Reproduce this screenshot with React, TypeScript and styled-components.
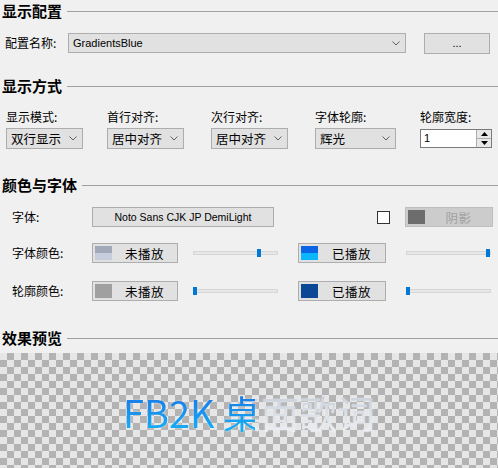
import React from 'react';
import styled, { createGlobalStyle } from 'styled-components';

const Global = createGlobalStyle`
  html, body { margin: 0; padding: 0; background: #f0f0f0; }
  body {
    font-family: "Liberation Sans", "Noto Sans CJK SC", sans-serif;
    font-size: 12px;
    color: #000;
  }
  #root { width: 498px; height: 468px; overflow: hidden; }
`;

const Page = styled.div`
  display: flex;
  flex-direction: column;
  width: 498px;
  height: 468px;
`;

const SectionHead = styled.div<{ $mt?: number }>`
  display: flex;
  align-items: center;
  gap: 5px;
  height: 22px;
  margin-top: ${p => p.$mt ?? 0}px;
  padding-left: 2px;
`;

const SectionTitle = styled.span`
  font-family: "Noto Sans CJK SC", sans-serif;
  font-weight: 700;
  font-size: 15px;
  line-height: 22px;
  white-space: nowrap;
`;

const SectionRule = styled.div`
  flex: 1;
  height: 1px;
  background: #a0a0a0;
`;

const ConfigRow = styled.div`
  display: flex;
  align-items: center;
  height: 22px;
  margin-top: 10px;
  padding-left: 5px;
`;

const Label = styled.span<{ $w?: number }>`
  width: ${p => (p.$w ? `${p.$w}px` : 'auto')};
  flex: none;
  font-family: "Noto Sans CJK SC", sans-serif;
  font-size: 12px;
  line-height: 14px;
  white-space: nowrap;
`;

const Combo = styled.div<{ $w: number; $h?: number }>`
  box-sizing: border-box;
  width: ${p => p.$w}px;
  height: ${p => p.$h ?? 21}px;
  display: flex;
  align-items: center;
  justify-content: space-between;
  padding: 0 5px 0 4px;
  background: #e1e1e1;
  border: 1px solid #adadad;
  font-family: "Noto Sans CJK SC", sans-serif;
  font-size: 12.5px;
`;

const ComboText = styled.span<{ $latin?: boolean }>`
  font-family: ${p => (p.$latin ? '"Liberation Sans", sans-serif' : '"Noto Sans CJK SC", sans-serif')};
  font-size: ${p => (p.$latin ? '11px' : '12.5px')};
  white-space: nowrap;
`;

const Chevron = () => (
  <svg width="8" height="5" viewBox="0 0 8 5" style={{ flex: 'none' }}>
    <polyline points="0.5,0.5 4,4 7.5,0.5" fill="none" stroke="#606060" strokeWidth="1" />
  </svg>
);

const PlainButton = styled.div<{ $w: number; $ml?: number }>`
  box-sizing: border-box;
  width: ${p => p.$w}px;
  height: 21px;
  margin-left: ${p => p.$ml ?? 0}px;
  display: flex;
  align-items: center;
  justify-content: center;
  background: #e1e1e1;
  border: 1px solid #adadad;
  font-family: "Liberation Sans", sans-serif;
  font-size: 11px;
`;

const ModeGrid = styled.div`
  display: grid;
  grid-template-columns: 101px 104px 104px 105px 72px;
  margin-top: 13px;
  padding-left: 6px;
`;

const Field = styled.div`
  display: flex;
  flex-direction: column;
  gap: 4px;
`;

const Spin = styled.div`
  box-sizing: border-box;
  width: 72px;
  height: 19px;
  margin-top: 1px;
  display: flex;
  align-items: stretch;
  background: #fff;
  border: 1px solid #7a7a7a;
`;

const SpinValue = styled.span`
  flex: 1;
  padding-left: 3px;
  font-family: "Liberation Sans", sans-serif;
  font-size: 11px;
  line-height: 17px;
`;

const SpinButtons = styled.div`
  width: 14px;
  display: flex;
  flex-direction: column;
  border-left: 1px solid #adadad;
`;

const SpinHalf = styled.div<{ $top?: boolean }>`
  flex: 1;
  display: flex;
  align-items: center;
  justify-content: center;
  background: #e8e8e8;
  border-bottom: ${p => (p.$top ? '1px solid #adadad' : 'none')};
`;

const Tri = ({ up }: { up?: boolean }) => (
  <svg width="7" height="4" viewBox="0 0 7 4">
    <polygon points={up ? '0,4 3.5,0 7,4' : '0,0 3.5,4 7,0'} fill="#000" />
  </svg>
);

const ItemRow = styled.div<{ $mt: number }>`
  display: flex;
  align-items: center;
  height: 20px;
  margin-top: ${p => p.$mt}px;
  padding-left: 12px;
`;

const FontButton = styled.div`
  box-sizing: border-box;
  width: 182px;
  height: 20px;
  display: flex;
  align-items: center;
  justify-content: center;
  background: #e1e1e1;
  border: 1px solid #adadad;
  font-family: "Liberation Sans", sans-serif;
  font-size: 10.5px;
  white-space: nowrap;
`;

const CheckBox = styled.div`
  box-sizing: border-box;
  width: 13px;
  height: 13px;
  margin-left: 103px;
  background: #fff;
  border: 1px solid #333;
`;

const ColorButton = styled.div<{ $w: number; $ml?: number; $disabled?: boolean }>`
  box-sizing: border-box;
  width: ${p => p.$w}px;
  height: 20px;
  margin-left: ${p => p.$ml ?? 0}px;
  display: flex;
  align-items: center;
  padding-left: 2px;
  background: ${p => (p.$disabled ? '#cccccc' : '#e1e1e1')};
  border: 1px solid ${p => (p.$disabled ? '#bfbfbf' : '#adadad')};
  color: ${p => (p.$disabled ? '#a0a0a0' : '#000')};
`;

const Swatch = styled.div<{ $bg: string }>`
  flex: none;
  width: 17px;
  height: 14px;
  background: ${p => p.$bg};
`;

const ColorText = styled.span`
  flex: 1;
  text-align: center;
  font-family: "Noto Sans CJK SC", sans-serif;
  font-size: 12.5px;
  letter-spacing: 0.5px;
`;

const SliderTrack = styled.div<{ $ml: number }>`
  position: relative;
  box-sizing: border-box;
  width: 85px;
  height: 4px;
  margin-left: ${p => p.$ml}px;
  background: #e7e7e7;
  border: 1px solid #d6d6d6;
`;

const SliderThumb = styled.div`
  position: absolute;
  top: -3px;
  width: 4px;
  height: 8px;
  background: #0078d7;
`;

const Slider = ({ ml, pos }: { ml: number; pos: number }) => (
  <SliderTrack $ml={ml}>
    <SliderThumb style={{ left: `${pos - 1}px` }} />
  </SliderTrack>
);

const Preview = styled.div`
  flex: 1;
  margin-top: 4px;
  display: flex;
  align-items: center;
  justify-content: center;
  background: repeating-conic-gradient(#b3b3b3 0% 25%, #e6e6e6 0% 50%) 0 0 / 14px 14px;
`;

const Lyric = styled.span`
  font-family: "Noto Sans CJK JP", sans-serif;
  font-weight: 400;
  font-size: 38px;
  line-height: 46px;
  white-space: nowrap;
  color: transparent;
  background:
    linear-gradient(#1a6fe6, #14b6f6) 0 0 / 132px 100% no-repeat,
    linear-gradient(#c4ccd8, #eef1f5);
  -webkit-background-clip: text;
  background-clip: text;
  filter: drop-shadow(0 0 1px rgba(255, 255, 255, 0.55));
  margin-top: 2px;
`;

const modes = [
  { label: '显示模式:', value: '双行显示', w: 77 },
  { label: '首行对齐:', value: '居中对齐', w: 77 },
  { label: '次行对齐:', value: '居中对齐', w: 77 },
  { label: '字体轮廓:', value: '辉光', w: 81 },
];

export default function App() {
  return (
    <Page>
      <Global />
      <SectionHead>
        <SectionTitle>显示配置</SectionTitle>
        <SectionRule />
      </SectionHead>
      <ConfigRow>
        <Label $w={63}>配置名称:</Label>
        <Combo $w={338} $h={20}>
          <ComboText $latin>GradientsBlue</ComboText>
          <Chevron />
        </Combo>
        <PlainButton $w={66} $ml={18}>...</PlainButton>
      </ConfigRow>

      <SectionHead $mt={21}>
        <SectionTitle>显示方式</SectionTitle>
        <SectionRule />
      </SectionHead>
      <ModeGrid>
        {modes.map(m => (
          <Field key={m.label}>
            <Label>{m.label}</Label>
            <Combo $w={m.w}>
              <ComboText>{m.value}</ComboText>
              <Chevron />
            </Combo>
          </Field>
        ))}
        <Field>
          <Label>轮廓宽度:</Label>
          <Spin>
            <SpinValue>1</SpinValue>
            <SpinButtons>
              <SpinHalf $top><Tri up /></SpinHalf>
              <SpinHalf><Tri /></SpinHalf>
            </SpinButtons>
          </Spin>
        </Field>
      </ModeGrid>

      <SectionHead $mt={25}>
        <SectionTitle>颜色与字体</SectionTitle>
        <SectionRule />
      </SectionHead>
      <ItemRow $mt={11}>
        <Label $w={80}>字体:</Label>
        <FontButton>Noto Sans CJK JP DemiLight</FontButton>
        <CheckBox />
        <ColorButton $w={88} $ml={15} $disabled>
          <Swatch $bg="#6d6d6d" />
          <ColorText>阴影</ColorText>
        </ColorButton>
      </ItemRow>
      <ItemRow $mt={16}>
        <Label $w={80}>字体颜色:</Label>
        <ColorButton $w={86}>
          <Swatch $bg="linear-gradient(#a0aab8 0 50%, #c6cedb 50% 100%)" />
          <ColorText>未播放</ColorText>
        </ColorButton>
        <Slider ml={15} pos={64} />
        <ColorButton $w={88} $ml={20}>
          <Swatch $bg="linear-gradient(#0b64e6 0 50%, #0cb6fd 50% 100%)" />
          <ColorText>已播放</ColorText>
        </ColorButton>
        <Slider ml={20} pos={80} />
      </ItemRow>
      <ItemRow $mt={18}>
        <Label $w={80}>轮廓颜色:</Label>
        <ColorButton $w={86}>
          <Swatch $bg="#a0a0a0" />
          <ColorText>未播放</ColorText>
        </ColorButton>
        <Slider ml={15} pos={0} />
        <ColorButton $w={88} $ml={20}>
          <Swatch $bg="#0a4896" />
          <ColorText>已播放</ColorText>
        </ColorButton>
        <Slider ml={20} pos={0} />
      </ItemRow>

      <SectionHead $mt={26}>
        <SectionTitle>效果预览</SectionTitle>
        <SectionRule />
      </SectionHead>
      <Preview>
        <Lyric>FB2K 桌面歌词</Lyric>
      </Preview>
    </Page>
  );
}
